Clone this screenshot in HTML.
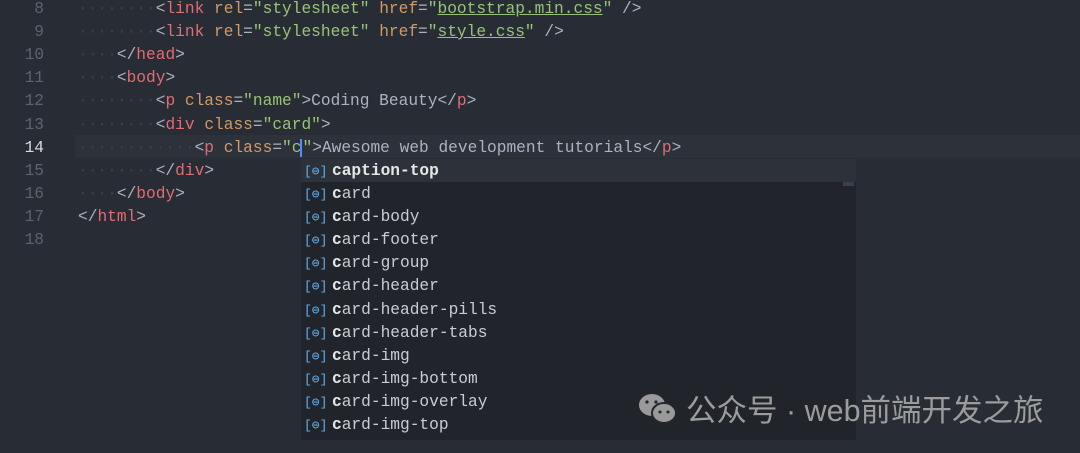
<!DOCTYPE html><html><head><style>
body{margin:0;width:1080px;height:453px;background:#282c34;overflow:hidden;font-family:"Liberation Mono",monospace;font-size:16.2px;position:relative}
.ln{position:absolute;left:0;width:44px;text-align:right;color:#5c6370;height:23px;line-height:23px}
.l{position:absolute;left:78px;height:23px;line-height:23px;white-space:pre;color:#abb2bf}
.t{color:#e06c75}.a{color:#d19a66}.s{color:#98c379}.p{color:#abb2bf}.d{color:#3b4048}
.u{text-decoration:underline;text-decoration-color:#98c379}
#pop{position:absolute;left:301px;top:159px;width:555px;height:281px;background:#21252b}
.r{height:23.1px;line-height:25px;padding-left:31px;position:relative;color:#c8ccd4;white-space:pre}
.r b{color:#e6e6e6}
.r i{position:absolute;left:3px;top:0;font-style:normal;color:#61afef;font-size:13px}
.sel{background:#2c313a}
</style></head><body>
<div style="position:absolute;left:75px;top:135px;width:1005px;height:23px;background:#2c313a"></div>
<div style="position:relative;top:2px">
<div class="ln" style="top:-4px">8</div><div class="ln" style="top:19px">9</div><div class="ln" style="top:42px">10</div><div class="ln" style="top:65px">11</div><div class="ln" style="top:88px">12</div><div class="ln" style="top:112px">13</div><div class="ln" style="top:135px;color:#d7dae0">14</div><div class="ln" style="top:158px">15</div><div class="ln" style="top:181px">16</div><div class="ln" style="top:204px">17</div><div class="ln" style="top:227px">18</div>
<div class="l" style="top:-4px"><span class="d">········</span><span class="p">&lt;</span><span class="t">link</span> <span class="a">rel</span>=<span class="s">"stylesheet"</span> <span class="a">href</span>=<span class="s">"<span class="u">bootstrap.min.css</span>"</span> /&gt;</div>
<div class="l" style="top:19px"><span class="d">········</span>&lt;<span class="t">link</span> <span class="a">rel</span>=<span class="s">"stylesheet"</span> <span class="a">href</span>=<span class="s">"<span class="u">style.css</span>"</span> /&gt;</div>
<div class="l" style="top:42px"><span class="d">····</span>&lt;/<span class="t">head</span>&gt;</div>
<div class="l" style="top:65px"><span class="d">····</span>&lt;<span class="t">body</span>&gt;</div>
<div class="l" style="top:88px"><span class="d">········</span>&lt;<span class="t">p</span> <span class="a">class</span>=<span class="s">"name"</span>&gt;Coding Beauty&lt;/<span class="t">p</span>&gt;</div>
<div class="l" style="top:112px"><span class="d">········</span>&lt;<span class="t">div</span> <span class="a">class</span>=<span class="s">"card"</span>&gt;</div>
<div class="l" style="top:135px"><span class="d">············</span>&lt;<span class="t">p</span> <span class="a">class</span>=<span class="s">"c<span style="border-left:2px solid #528bff;margin-left:-1px"></span>"</span>&gt;Awesome web development tutorials&lt;/<span class="t">p</span>&gt;</div>
<div class="l" style="top:158px"><span class="d">········</span>&lt;/<span class="t">div</span>&gt;</div>
<div class="l" style="top:181px"><span class="d">····</span>&lt;/<span class="t">body</span>&gt;</div>
<div class="l" style="top:204px">&lt;/<span class="t">html</span>&gt;</div>
</div>
<div id="pop">
<div style="position:absolute;right:2px;top:2px;width:11px;height:25px;background:#3a3f4b"></div>
<div class="r sel"><i>[⊜]</i><b>caption-top</b></div>
<div class="r"><i>[⊜]</i><b>c</b>ard</div>
<div class="r"><i>[⊜]</i><b>c</b>ard-body</div>
<div class="r"><i>[⊜]</i><b>c</b>ard-footer</div>
<div class="r"><i>[⊜]</i><b>c</b>ard-group</div>
<div class="r"><i>[⊜]</i><b>c</b>ard-header</div>
<div class="r"><i>[⊜]</i><b>c</b>ard-header-pills</div>
<div class="r"><i>[⊜]</i><b>c</b>ard-header-tabs</div>
<div class="r"><i>[⊜]</i><b>c</b>ard-img</div>
<div class="r"><i>[⊜]</i><b>c</b>ard-img-bottom</div>
<div class="r"><i>[⊜]</i><b>c</b>ard-img-overlay</div>
<div class="r"><i>[⊜]</i><b>c</b>ard-img-top</div>
</div>
<svg style="position:absolute;left:637px;top:392px" width="42" height="34" viewBox="0 0 42 34"><ellipse cx="15" cy="13" rx="13" ry="11" fill="#9a9a9a"/><ellipse cx="27" cy="21" rx="12" ry="10" fill="#9a9a9a" stroke="#22262d" stroke-width="2"/><circle cx="10" cy="10" r="1.6" fill="#22262d"/><circle cx="19" cy="10" r="1.6" fill="#22262d"/><circle cx="23" cy="20" r="1.5" fill="#22262d"/><circle cx="31" cy="20" r="1.5" fill="#22262d"/></svg>
<div style="position:absolute;left:686px;top:386px;font-family:'Liberation Sans','Noto Sans CJK SC',sans-serif;font-size:30.5px;color:#9c9c9c;white-space:nowrap">公众号 · web前端开发之旅</div>
</body></html>
